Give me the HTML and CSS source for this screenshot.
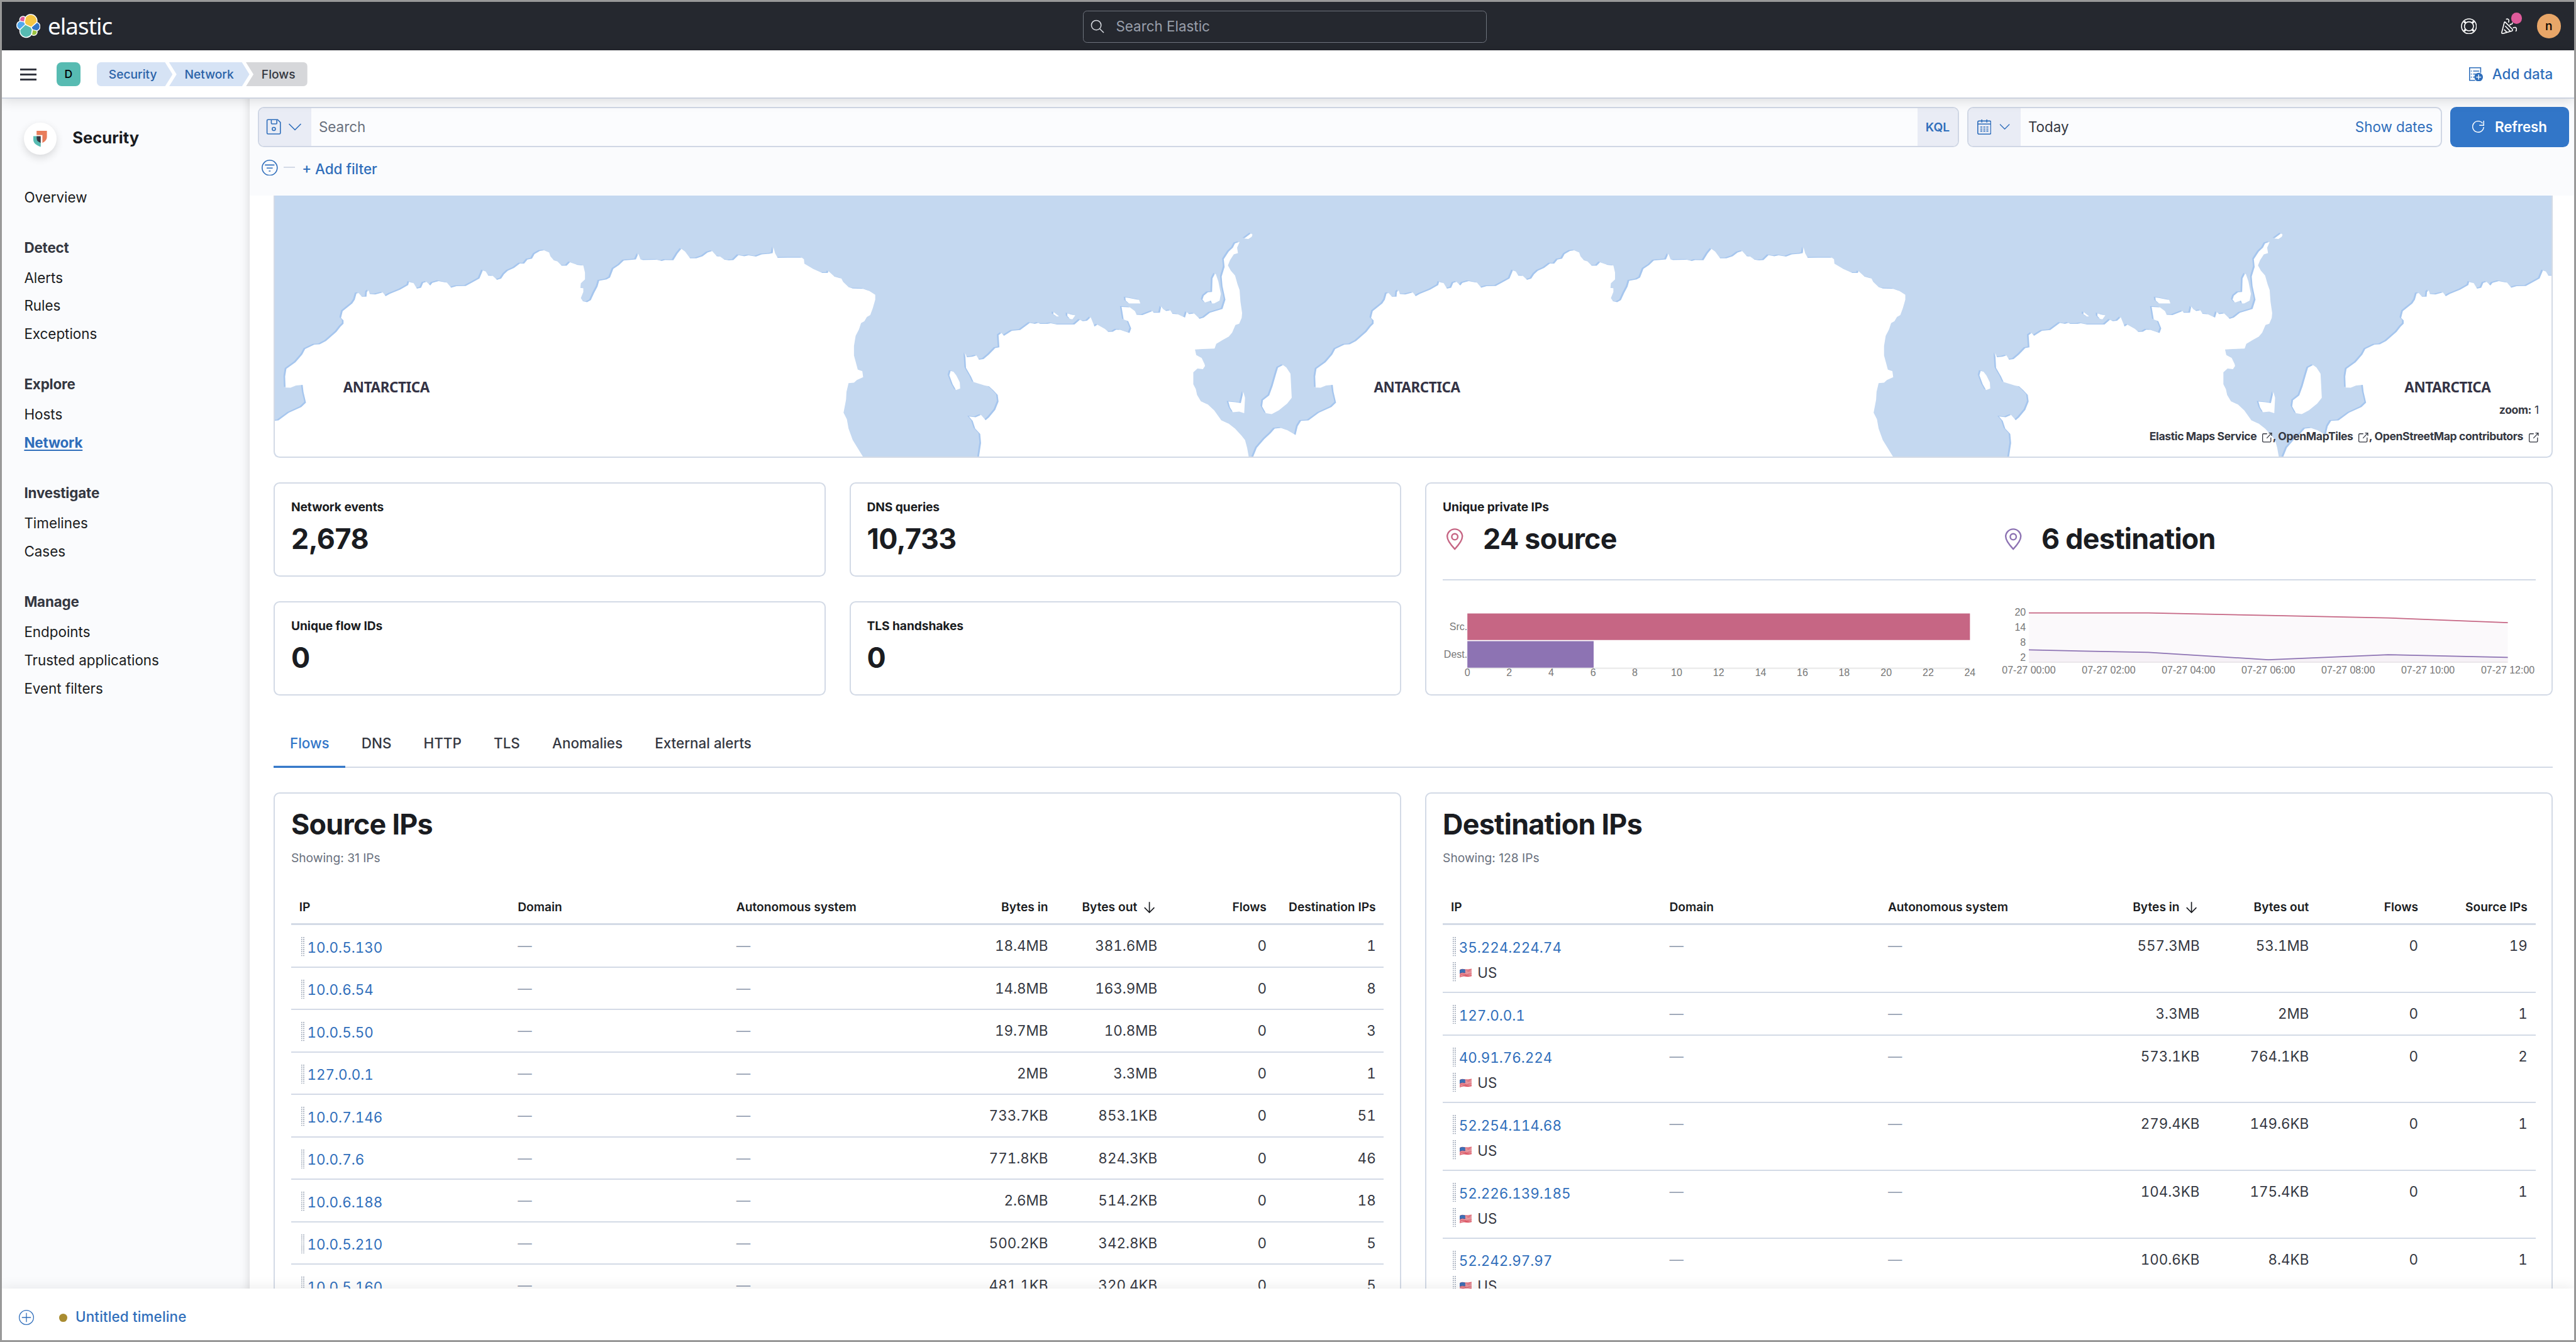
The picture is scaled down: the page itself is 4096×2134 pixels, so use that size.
FILE: index.html
```html
<!DOCTYPE html>
<html lang="en">
<head>
<meta charset="utf-8">
<title>Network - Security - Elastic</title>
<link rel="stylesheet" href="styles.css">
</head>
<body>
<svg class="defs" aria-hidden="true">
  <symbol id="flag" viewBox="0 0 24 18">
    <path fill="#f4f4f4" d="M0 3C5 -.5 8 1.5 12 2S20 1 24 .5V15C20 17 16 15.500 12 15.500S4 15.500 0 17.500Z"/>
    <path fill="none" stroke="#d8394a" stroke-width="1.300" d="M0 3.600C5 .1 8 2.100 12 2.600S20 1.600 24 1.100M0 6C5 2.500 8 4.500 12 5S20 4 24 3.500M0 8.400C5 4.900 8 6.900 12 7.400S20 6.400 24 5.900M0 10.800C5 7.300 8 9.300 12 9.800S20 8.800 24 8.300M0 13C5 9.700 8 11.500 12 12S20 11.200 24 10.700M0 15C5 11.900 8 13.500 12 13.900S20 13.500 24 12.900M0 17C5 13.900 8 15 12 15.300S20 15.700 24 14.700"/>
    <path fill="#3d6fb4" d="M0 3C4 .3 7 1 11 1.900V9C7 8 4 7.800 0 10.200Z"/>
  </symbol>
  <symbol id="popout" viewBox="0 0 16 16">
    <path fill="none" stroke="currentColor" stroke-width="1.200" d="M8 2.500H3A1.500 1.500 0 0 0 1.500 4V13A1.500 1.500 0 0 0 3 14.500H12A1.500 1.500 0 0 0 13.500 13V8M10.500 1.500H14.500V5.500M14.500 1.500L7.500 9"/>
  </symbol>
  <symbol id="chevron" viewBox="0 0 16 16">
    <path fill="none" stroke="currentColor" stroke-width="1.100" stroke-linecap="round" stroke-linejoin="round" d="M2 5L8 11L14 5"/>
  </symbol>
  <symbol id="pin" viewBox="0 0 16 16">
    <path fill="none" stroke="currentColor" d="M8 14.600C5 11.500 3 8.800 3 6.300A5 4.900 0 0 1 13 6.300C13 8.800 11 11.500 8 14.600Z"/>
    <circle cx="8" cy="6.500" r="2" fill="none" stroke="currentColor"/>
  </symbol>
  <symbol id="sort-down" viewBox="0 0 16 16">
    <path fill="none" stroke="currentColor" stroke-width="1.400" d="M8 1V15M1.500 8.500L8 15L14.500 8.500"/>
  </symbol>
</svg>

<div class="app">
  <header class="topbar">
    <a class="brand">
      <svg class="brand-mark" viewBox="0 0 32 32">
        <g id="cluster" fill="#fff" stroke="#fff" stroke-width="2.400" stroke-linejoin="round">
          <path d="M12.580 13.787l7.002 3.211 7.066-6.213a7.849 7.849 0 0 0 .152-1.557c0-4.287-3.472-7.760-7.744-7.760a7.707 7.707 0 0 0-6.396 3.390l-1.176 6.118z"/>
          <path d="M5.333 21.228A7.964 7.964 0 0 0 5.180 22.800c0 4.287 3.489 7.775 7.776 7.775 2.580 0 4.984-1.284 6.428-3.406l1.160-6.091-1.556-2.987-7.033-3.210z"/>
          <path d="M5.288 9.067l4.799 1.136L11.140 4.730A3.790 3.790 0 0 0 8.846 3.960 3.810 3.810 0 0 0 5.040 7.766c0 .448.088.896.248 1.300z"/>
          <path d="M4.872 10.214C2.740 10.923 1.240 12.958 1.240 15.200c0 2.184 1.351 4.136 3.376 4.910l6.734-6.120-1.232-2.655z"/>
          <path d="M20.874 27.187a3.803 3.803 0 0 0 2.287.773 3.810 3.810 0 0 0 3.806-3.805c0-.470-.080-.918-.240-1.320l-4.799-1.122z"/>
          <path d="M21.848 20.560l5.280 1.237A5.315 5.315 0 0 0 30.760 16.800 5.260 5.260 0 0 0 27.384 11.900l-6.902 6.060z"/>
        </g>
        <path fill="#f5c644" d="M12.580 13.787l7.002 3.211 7.066-6.213a7.849 7.849 0 0 0 .152-1.557c0-4.287-3.472-7.760-7.744-7.760a7.707 7.707 0 0 0-6.396 3.390l-1.176 6.118z"/>
        <path fill="#57bbb2" d="M5.333 21.228A7.964 7.964 0 0 0 5.180 22.800c0 4.287 3.489 7.775 7.776 7.775 2.580 0 4.984-1.284 6.428-3.406l1.160-6.091-1.556-2.987-7.033-3.210z"/>
        <path fill="#df5b9b" d="M5.288 9.067l4.799 1.136L11.140 4.730A3.790 3.790 0 0 0 8.846 3.960 3.810 3.810 0 0 0 5.040 7.766c0 .448.088.896.248 1.300z"/>
        <path fill="#53a8ed" d="M4.872 10.214C2.740 10.923 1.240 12.958 1.240 15.200c0 2.184 1.351 4.136 3.376 4.910l6.734-6.120-1.232-2.655z"/>
        <path fill="#9bc441" d="M20.874 27.187a3.803 3.803 0 0 0 2.287.773 3.810 3.810 0 0 0 3.806-3.805c0-.470-.080-.918-.240-1.320l-4.799-1.122z"/>
        <path fill="#3276c8" d="M21.848 20.560l5.280 1.237A5.315 5.315 0 0 0 30.760 16.800 5.260 5.260 0 0 0 27.384 11.900l-6.902 6.060z"/>
      </svg>
      <span class="brand-name">elastic</span>
    </a>
    <div class="global-search">
      <svg viewBox="0 0 16 16"><path fill="none" stroke="currentColor" stroke-width="1.100" d="M10.500 10.500L15 15"/><circle cx="6.500" cy="6.500" r="5.500" fill="none" stroke="currentColor" stroke-width="1.100"/></svg>
      <span>Search Elastic</span>
    </div>
    <div class="topbar-actions">
      <svg class="icon" viewBox="0 0 16 16" fill="none" stroke="currentColor"><circle cx="8" cy="8" r="7.400"/><circle cx="8" cy="8" r="4.500"/><path stroke-width="2" d="M3.200 3.200L4.800 4.800M12.800 3.200L11.200 4.800M3.200 12.800L4.800 11.200M12.800 12.800L11.200 11.200"/></svg>
      <span class="news">
        <svg class="icon" viewBox="0 0 16 16" fill="none" stroke="currentColor" stroke-linecap="round" stroke-linejoin="round"><path d="M4 3.800L11 10.800C11.600 11.500 11.400 12.300 10.700 12.600L1.800 15.200C1 15.400.4 14.900.6 14.100L3.100 4.400C3.200 3.700 3.600 3.500 4 3.800ZM3.200 11.500L5.800 14M4.300 8L9 12.900M5.200.9C6.500.3 7.800 1.200 7.700 2.500 7.700 3 7.600 3.400 7.300 3.900M8.700 6.700C9 5.900 9.700 5.800 10.400 5.900 11 5.800 11.200 5.200 11.200 4.600M12 9.500C13.500 8.600 15 9 15.200 10.600 15.300 11.400 15 12.200 14.700 12.700"/></svg>
        <i class="news-dot"></i>
      </span>
      <span class="user">n</span>
    </div>
  </header>

  <div class="crumbbar">
    <span class="menu"><i></i><i></i><i></i></span>
    <span class="space">D</span>
    <nav class="crumbs">
      <a class="crumb crumb-first">Security</a>
      <a class="crumb">Network</a>
      <span class="crumb crumb-last">Flows</span>
    </nav>
    <a class="add-data">
      <svg viewBox="0 0 28 28"><path fill="none" stroke="currentColor" stroke-width="2" d="M12 26H1V1H23V11M3.500 7.500H5.500M8 7.500H20M3.500 13.500H5.500M8 13.500H14M3.500 19.500H5.500M8 19.500H11"/><circle cx="19" cy="19.500" r="8.500" fill="currentColor"/><path stroke="#fff" stroke-width="1.800" d="M19 14.500V24.500M14 19.500H24"/></svg>
      <span>Add data</span>
    </a>
  </div>

  <div class="body">
    <aside class="sidebar">
      <div class="solution">
        <span class="solution-icon"><svg viewBox="0 0 27 32"><path fill="#e87c5a" d="M6.500 0H27V12C27 18 23.500 21.500 18 24V8.500H6.500Z"/><path fill="#57bbb2" d="M0 10.500H6.500V17L14.700 24.300V32C5 28.500 0 24 0 17.500Z"/><path fill="#343741" d="M6.500 10.500H14.700V24.300C9 21.500 6.500 19.500 6.500 15Z"/></svg></span>
        <h2>Security</h2>
      </div>
      <ul><li>Overview</li></ul>
      <ul><li class="group">Detect</li><li>Alerts</li><li>Rules</li><li>Exceptions</li></ul>
      <ul><li class="group">Explore</li><li>Hosts</li><li><a class="current">Network</a></li></ul>
      <ul><li class="group">Investigate</li><li>Timelines</li><li>Cases</li></ul>
      <ul><li class="group">Manage</li><li>Endpoints</li><li>Trusted applications</li><li>Event filters</li></ul>
    </aside>

    <main class="main">
      <section class="querybar">
        <div class="query-row">
          <div class="field query-field">
            <span class="prepend saved">
              <svg class="icon" viewBox="0 0 32 32" fill="none" stroke="currentColor" stroke-width="2"><path d="M4 1.500H23L28.500 7V28A2 2 0 0 1 26.500 30H4A2 2 0 0 1 2 28V3.500A2 2 0 0 1 4 1.500ZM10.500 2V8.500A1.500 1.500 0 0 0 12 10H20A1.500 1.500 0 0 0 21.500 8.500V2"/><circle cx="15.500" cy="20" r="3.200"/></svg>
              <svg class="chev" viewBox="0 0 16 16"><use href="#chevron"/></svg>
            </span>
            <span class="placeholder">Search</span>
            <span class="kql">KQL</span>
          </div>
          <div class="field date-field">
            <span class="prepend calendar">
              <svg class="cal" viewBox="0 0 28 30" fill="none" stroke="currentColor" stroke-width="2"><rect x="1" y="3" width="26" height="26" rx="2.500"/><path d="M1 9H27M9 0V6M19 0V6"/><path stroke-dasharray="4 2" d="M6 15H22M6 19H22M6 23H22"/></svg>
              <svg class="chev-s" viewBox="0 0 16 16"><use href="#chevron"/></svg>
            </span>
            <span class="today">Today</span>
            <a class="show-dates">Show dates</a>
          </div>
          <button class="refresh">
            <svg viewBox="0 0 24 26" fill="none" stroke="currentColor" stroke-width="1.800"><path d="M20.500 5A11 11 0 1 0 22.800 12.500M22.800 0V9H14"/></svg>
            <span>Refresh</span>
          </button>
        </div>
        <div class="filter-row">
          <svg class="filter-icon" viewBox="0 0 32 32" fill="none" stroke="currentColor" stroke-width="2"><circle cx="16" cy="16" r="15"/><path d="M6.500 10.500H25.500M10 16.500H22M14.300 22.500H17.700"/></svg>
          <i class="filter-dash"></i>
          <a>+ Add filter</a>
        </div>
      </section>

      <div class="content">
        <section class="map">
          <svg class="map-canvas" viewBox="545 388 4526 520" preserveAspectRatio="none">
            <defs>
              <g id="continent">
                <path d="M-70 1465V1458L-61 1410-43 1365-28 1335-18 1310-3 1307 12 1318 32 1344 37 1298 45 1270 63 1268 88 1228 118 1198 129 1175 123 1120 121 1083 105 1086 92 1098 80 1097 79 1040 82 1000 104 965 120 925 127 897 149 874 162 872 177 855 202 808 212 780 219 765 219 748 213 735 217 700 240 660 246 640 250 608 255 606 263 625 274 625 275 600 279 592 282 611 295 613 313 603 320 622 330 610 355 588 374 564 376 548 387 554 395 583 405 578 410 553 418 548 427 567 432 553 447 544 457 548 467 552 477 578 490 570 512 569 528 550 545 530 553 488 560 494 566 515 577 517 587 537 597 531 604 508 613 490 628 475 642 452 652 453 660 432 671 427 677 403 690 387 700 384 712 395 715 415 723 435 732 442 742 464 754 464 762 446 780 460 794 463 798 500 798 535 788 555 787 578 794 581 794 600 788 632 793 648 803 653 812 643 820 605 828 572 832 542 850 535 858 525 866 480 880 460 891 437 920 431 926 402 931 430 937 434 970 433 982 439 990 434 1010 435 1020 400 1029 376 1038 390 1050 425 1065 425 1080 415 1092 395 1103 388 1114 415 1122 416 1132 432 1143 436 1154 434 1166 409 1180 415 1190 410 1208 416 1222 405 1240 402 1248 398 1250 368 1254 400 1260 423 1285 422 1318 422 1323 430 1324 453 1345 480 1367 501 1380 501 1382 492 1396 520 1413 531 1417 548 1430 575 1440 582 1465 584 1480 595 1494 615 1494 640 1488 685 1482 720 1474 730 1468 752 1460 762 1455 795 1447 828 1443 880 1443 930 1448 970 1452 1003 1463 1012 1465 1043 1450 1058 1443 1072 1430 1074 1425 1120 1424 1160 1418 1228 1426 1262 1430 1310 1440 1370 1465 1458V1465Z"/>
                <path transform="translate(1326.700 0)" d="M416 1465V1458L421 1385 419 1338 407 1310 401 1270 392 1247 408 1251 421 1239 432 1267 440 1252 455 1213 463 1170 461 1135 450 1110 440 1090 430 1086 403 1068 397 1040 385 995 383 918 387 939 400 937 410 930 416 952 427 949 440 925 455 892 465 888 463 825 470 813 476 828 495 802 515 798 538 761 550 766 558 761 563 766 580 766 588 763 603 769 645 769 658 745 665 752 675 750 684 732 693 780 700 770 718 792 726 808 737 807 745 796 755 797 777 813 781 790 774 752 763 743 758 678 778 680 790 700 794 719 808 720 832 700 835 708 850 708 853 676 858 690 865 699 875 696 880 714 893 716 910 733 914 705 920 715 932 712 945 740 955 733 970 708 1000 688 1007 640 1000 570 998 520 1005 470 1003 430 1015 390 1025 370 1030 348 1041 340 1035 370 1037 398 1027 405 1018 435 1013 462 1020 490 1030 514 1036 560 1041 590 1043 650 1047 710 1046 735 1040 765 1031 772 1023 812 1015 832 1000 850 985 870 981 894 952 897 934 899 937 928 950 943 957 975 958 985 953 1001 940 998 930 1018 930 1080 936 1105 939 1135 948 1168 965 1185 980 1215 997 1267 1015 1285 1030 1310 1045 1345 1054 1370 1059 1410 1063 1458V1465Z
                M1052 322L1068 296 1072 302 1070 313 1062 325ZM982 505L976 530 975 600 965 602 955 620 952 640 958 655 972 645 975 660 980 660 993 645 996 610 990 545 984 508ZM767 629L775 631 800 642 803 660 776 660 768 645ZM595 705L608 727 603 728 594 715ZM628 711L636 717 647 722 640 742 634 740 628 725ZM348 1010L355 1015 362 1035 370 1070 371 1102 361 1110 353 1080 345 1033ZM1145 980L1153 992 1163 1025 1166 1150 1155 1180 1135 1215 1118 1235 1104 1230 1095 1195 1097 1163 1112 1138 1120 1090 1128 1030 1133 994ZM1050 1120L1054 1150 1052 1230 1040 1222 1025 1225 1018 1200 1014 1170 1030 1173 1044 1178Z"/>
              </g>
            </defs>
            <g transform="translate(500 350) scale(.8291 .3827)">
              <g fill="#a6c6ee" transform="translate(-4 -4)"><use href="#continent"/><use href="#continent" x="2470"/><use href="#continent" x="4940"/></g>
              <g fill="#fff"><use href="#continent"/><use href="#continent" x="2470"/><use href="#continent" x="4940"/></g>
            </g>
            <g class="map-label"><text x="681" y="780">ANTARCTICA</text><text x="2730" y="780">ANTARCTICA</text><text x="4779" y="780">ANTARCTICA</text></g>
          </svg>
          <div class="map-notes">
            <p><b>zoom:</b> 1</p>
            <p class="credits"><b>Elastic Maps Service</b><svg viewBox="0 0 16 16"><use href="#popout"/></svg><b>, OpenMapTiles</b><svg viewBox="0 0 16 16"><use href="#popout"/></svg><b>, OpenStreetMap contributors</b><svg viewBox="0 0 16 16"><use href="#popout"/></svg></p>
          </div>
        </section>

        <section class="kpis">
          <div class="kpi-grid">
            <div class="panel kpi"><h4>Network events</h4><strong>2,678</strong></div>
            <div class="panel kpi"><h4>DNS queries</h4><strong>10,733</strong></div>
            <div class="panel kpi"><h4>Unique flow IDs</h4><strong>0</strong></div>
            <div class="panel kpi"><h4>TLS handshakes</h4><strong>0</strong></div>
          </div>
          <div class="panel kpi">
            <h4>Unique private IPs</h4>
            <div class="halves">
              <div class="stat"><svg class="source" viewBox="0 0 16 16"><use href="#pin"/></svg><strong>24 source</strong></div>
              <div class="stat"><svg class="dest" viewBox="0 0 16 16"><use href="#pin"/></svg><strong>6 destination</strong></div>
            </div>
            <hr>
            <div class="halves charts">
              <svg viewBox="2866 1176 1062 172">
                <path stroke="#eaeaea" stroke-width="3" d="M2915 1328H3914"/>
                <path fill="#c66684" d="M2915 1219H3914V1272H2915Z"/>
                <path fill="#8d73b3" d="M2915 1274H3166V1327H2915Z"/>
                <g text-anchor="end"><text x="2915" y="1252">Src.</text><text x="2915" y="1307">Dest.</text></g>
                <g text-anchor="middle"><text x="2915" y="1344">0</text><text x="2998" y="1344">2</text><text x="3081.500" y="1344">4</text><text x="3165" y="1344">6</text><text x="3248" y="1344">8</text><text x="3331" y="1344">10</text><text x="3414.500" y="1344">12</text><text x="3498" y="1344">14</text><text x="3581" y="1344">16</text><text x="3664" y="1344">18</text><text x="3747.500" y="1344">20</text><text x="3831" y="1344">22</text><text x="3914" y="1344">24</text></g>
              </svg>
              <svg viewBox="3976 1176 1062 172">
                <path fill="#fbf9fb" d="M4031 1218H4269L4507 1223 4745 1228 4983 1237.500V1316H4031Z"/>
                <path fill="#f6f1f6" d="M4031 1291.500L4269 1296.500 4507 1311 4745 1301 4983 1306.500V1316H4031Z"/>
                <path stroke="#e4e0e4" stroke-width="2" d="M4031 1316H4983"/>
                <path fill="none" stroke="#c66684" stroke-width="2.200" d="M4031 1218H4269L4507 1223 4745 1228 4983 1237.500"/>
                <path fill="none" stroke="#8d73b3" stroke-width="2.200" d="M4031 1291.500L4269 1296.500 4507 1311 4745 1301 4983 1306.500"/>
                <g text-anchor="end"><text x="4025" y="1224">20</text><text x="4025" y="1254">14</text><text x="4025" y="1283">8</text><text x="4025" y="1313">2</text></g>
                <g text-anchor="middle"><text x="4031" y="1338">07-27 00:00</text><text x="4189.700" y="1338">07-27 02:00</text><text x="4348.300" y="1338">07-27 04:00</text><text x="4507" y="1338">07-27 06:00</text><text x="4665.700" y="1338">07-27 08:00</text><text x="4824.300" y="1338">07-27 10:00</text><text x="4983" y="1338">07-27 12:00</text></g>
              </svg>
            </div>
          </div>
        </section>

        <nav class="tabs"><a class="active">Flows</a><a>DNS</a><a>HTTP</a><a>TLS</a><a>Anomalies</a><a>External alerts</a></nav>

        <section class="tables">
          <div class="panel">
            <h3>Source IPs</h3>
            <p class="showing">Showing: 31 IPs</p>
            <div class="row head"><span>IP</span><span>Domain</span><span>Autonomous system</span><span>Bytes in</span><span>Bytes out<svg viewBox="0 0 16 16"><use href="#sort-down"/></svg></span><span>Flows</span><span>Destination IPs</span></div>
            <div class="row"><div class="ip"><a>10.0.5.130</a></div><i>—</i><i>—</i><span>18.4MB</span><span>381.6MB</span><span>0</span><span>1</span></div>
            <div class="row"><div class="ip"><a>10.0.6.54</a></div><i>—</i><i>—</i><span>14.8MB</span><span>163.9MB</span><span>0</span><span>8</span></div>
            <div class="row"><div class="ip"><a>10.0.5.50</a></div><i>—</i><i>—</i><span>19.7MB</span><span>10.8MB</span><span>0</span><span>3</span></div>
            <div class="row"><div class="ip"><a>127.0.0.1</a></div><i>—</i><i>—</i><span>2MB</span><span>3.3MB</span><span>0</span><span>1</span></div>
            <div class="row"><div class="ip"><a>10.0.7.146</a></div><i>—</i><i>—</i><span>733.7KB</span><span>853.1KB</span><span>0</span><span>51</span></div>
            <div class="row"><div class="ip"><a>10.0.7.6</a></div><i>—</i><i>—</i><span>771.8KB</span><span>824.3KB</span><span>0</span><span>46</span></div>
            <div class="row"><div class="ip"><a>10.0.6.188</a></div><i>—</i><i>—</i><span>2.6MB</span><span>514.2KB</span><span>0</span><span>18</span></div>
            <div class="row"><div class="ip"><a>10.0.5.210</a></div><i>—</i><i>—</i><span>500.2KB</span><span>342.8KB</span><span>0</span><span>5</span></div>
            <div class="row"><div class="ip"><a>10.0.5.160</a></div><i>—</i><i>—</i><span>481.1KB</span><span>320.4KB</span><span>0</span><span>5</span></div>
          </div>
          <div class="panel">
            <h3>Destination IPs</h3>
            <p class="showing">Showing: 128 IPs</p>
            <div class="row head"><span>IP</span><span>Domain</span><span>Autonomous system</span><span>Bytes in<svg viewBox="0 0 16 16"><use href="#sort-down"/></svg></span><span>Bytes out</span><span>Flows</span><span>Source IPs</span></div>
            <div class="row tall"><div class="ip"><a>35.224.224.74</a><span class="geo"><svg viewBox="0 0 24 18"><use href="#flag"/></svg>US</span></div><i>—</i><i>—</i><span>557.3MB</span><span>53.1MB</span><span>0</span><span>19</span></div>
            <div class="row"><div class="ip"><a>127.0.0.1</a></div><i>—</i><i>—</i><span>3.3MB</span><span>2MB</span><span>0</span><span>1</span></div>
            <div class="row tall"><div class="ip"><a>40.91.76.224</a><span class="geo"><svg viewBox="0 0 24 18"><use href="#flag"/></svg>US</span></div><i>—</i><i>—</i><span>573.1KB</span><span>764.1KB</span><span>0</span><span>2</span></div>
            <div class="row tall"><div class="ip"><a>52.254.114.68</a><span class="geo"><svg viewBox="0 0 24 18"><use href="#flag"/></svg>US</span></div><i>—</i><i>—</i><span>279.4KB</span><span>149.6KB</span><span>0</span><span>1</span></div>
            <div class="row tall"><div class="ip"><a>52.226.139.185</a><span class="geo"><svg viewBox="0 0 24 18"><use href="#flag"/></svg>US</span></div><i>—</i><i>—</i><span>104.3KB</span><span>175.4KB</span><span>0</span><span>1</span></div>
            <div class="row tall"><div class="ip"><a>52.242.97.97</a><span class="geo"><svg viewBox="0 0 24 18"><use href="#flag"/></svg>US</span></div><i>—</i><i>—</i><span>100.6KB</span><span>8.4KB</span><span>0</span><span>1</span></div>
          </div>
        </section>
      </div>
    </main>
  </div>

  <footer class="timeline-bar">
    <svg viewBox="0 0 30 30" fill="none" stroke="currentColor" stroke-width="1.600"><circle cx="15" cy="15" r="14.200"/><path d="M15 6V24M6 15H24"/></svg>
    <i></i>
    <a>Untitled timeline</a>
  </footer>
</div>
</body>
</html>
```
FILE: styles.css
```css
/* 1rem = 10 layout units; the root size scales with the window */
html { font-size: calc(100vw / 255.9); }
* { box-sizing: border-box; margin: 0; }
body {
  height: 100vh;
  padding: 0.2rem;
  overflow: hidden;
  background: #999;
  color: #343741;
  font: 400 1.4rem/2.8rem Inter, "Liberation Sans", sans-serif;
}
ul { list-style: none; padding: 0; }
svg { display: block; flex: none; }
i { font-style: normal; }
.defs { position: absolute; width: 0; height: 0; }
.icon { width: 1.6rem; height: 1.6rem; }

.app { display: flex; flex-direction: column; height: 100%; background: #fff; overflow: hidden; }

/* top bar */
.topbar {
  flex: none;
  display: grid;
  grid-template-columns: 107.4rem 40.1rem 1fr;
  align-items: center;
  height: 4.8rem;
  background: #25282f;
  color: #fff;
}
.brand { display: flex; align-items: center; padding-left: 1.4rem; }
.brand-mark { width: 2.4rem; height: 2.4rem; }
.brand-name { margin-left: 0.75rem; font: 400 2.3rem/2.4rem "Noto Sans", sans-serif; letter-spacing: -0.06rem; }
.global-search {
  display: flex;
  align-items: center;
  gap: 1.1rem;
  height: 3.2rem;
  margin-top: 0.1rem;
  padding: 0 0.7rem;
  border: 1px solid #6f747e;
  border-radius: 0.4rem;
  color: #999fab;
}
.global-search svg { width: 1.4rem; height: 1.4rem; color: #d5d8de; }
.topbar-actions { display: flex; align-items: center; justify-content: flex-end; padding-right: 1.3rem; }
.news { position: relative; margin: 0 1.95rem 0 2.4rem; }
.news-dot { position: absolute; top: -0.55rem; right: -0.5rem; width: 1.1rem; height: 1.1rem; border-radius: 50%; background: #df5b9b; }
.user { width: 2.4rem; height: 2.4rem; border-radius: 50%; background: #e8a668; color: #000; font-weight: 500; font-size: 1.2rem; line-height: 2.4rem; text-align: center; }

/* breadcrumb bar */
.crumbbar {
  flex: none;
  position: relative;
  z-index: 2;
  display: flex;
  align-items: center;
  height: 4.8rem;
  padding: 0.1rem 2.1rem 0 1.8rem;
  border-bottom: 2px solid #cdd3df;
  background: #fff;
  box-shadow: 0 0.1rem 1.2rem rgba(0, 0, 0, 0.14);
}
.menu { display: flex; flex-direction: column; gap: 0.3rem; width: 1.6rem; }
.menu i { height: 0.2rem; background: #343741; }
.space { width: 2.4rem; height: 2.4rem; margin-left: 2rem; border-radius: 0.5rem; background: #57bbb2; color: #000; font-weight: 500; font-size: 1.1rem; line-height: 2.4rem; text-align: center; }
.crumbs { display: flex; margin-left: 1.6rem; border-radius: 0.4rem; overflow: hidden; font-size: 1.2rem; font-weight: 500; line-height: 2.4rem; }
.crumb { padding: 0 1.55rem; margin-right: -0.35rem; background: #d6e3f5; color: #2a62a8; clip-path: polygon(0 0, calc(100% - 0.75rem) 0, 100% 50%, calc(100% - 0.75rem) 100%, 0 100%, 0.75rem 50%); }
.crumb-first { padding-left: 1.2rem; clip-path: polygon(0 0, calc(100% - 0.75rem) 0, 100% 50%, calc(100% - 0.75rem) 100%, 0 100%); }
.crumb-last { margin-right: 0; padding-right: 1.2rem; background: #d6d7da; color: #343741; clip-path: polygon(0 0, 100% 0, 100% 100%, 0 100%, 0.75rem 50%); }
.add-data { display: flex; align-items: center; gap: 0.9rem; margin-left: auto; color: #2f6ebb; font-weight: 500; }
.add-data svg { width: 1.4rem; height: 1.4rem; }

.body { flex: 1; display: flex; min-height: 0; }

/* solution navigation */
.sidebar {
  flex: none;
  width: 24.6rem;
  padding: 2.4rem 2.2rem;
  background: #fafbfd;
  color: #1a1c21;
  box-shadow: inset -1rem 0 1rem -1rem rgba(0, 0, 0, 0.16);
}
.solution { display: flex; align-items: center; gap: 1.6rem; height: 3.2rem; margin-bottom: 2.82rem; }
.solution-icon { display: flex; align-items: center; justify-content: center; width: 3.2rem; height: 3.2rem; border-radius: 50%; background: #fff; box-shadow: 0 0.3rem 0.8rem rgba(0, 0, 0, 0.14); }
.solution-icon svg { width: 1.35rem; height: 1.6rem; }
.solution h2 { padding-bottom: 0.2rem; font-size: 1.6rem; font-weight: 700; }
.sidebar ul + ul { margin-top: 2.2rem; }
.group { margin-bottom: 0.2rem; color: #343741; font-weight: 700; letter-spacing: -0.01rem; }
.current { color: #2f6ebb; font-weight: 700; letter-spacing: -0.01rem; text-decoration: underline; text-underline-offset: 0.2rem; }

/* query bar */
.main { flex: 1; min-width: 0; overflow: hidden; }
.querybar { height: 9.61rem; padding: 0.8rem 0.5rem 0 0.8rem; background: #fafbfd; }
.query-row { display: flex; gap: 0.8rem; height: 4rem; }
.field { display: flex; align-items: center; border: 2px solid #d0d7e5; border-radius: 0.6rem; background: #fbfcfe; overflow: hidden; }
.prepend { display: flex; align-items: center; align-self: stretch; background: #e9ecf5; color: #2f6ebb; }
.query-field { flex: 1; }
.saved { gap: 0.5rem; width: 5.2rem; padding-left: 0.7rem; }
.chev { width: 1.5rem; height: 1.5rem; }
.placeholder { flex: 1; padding: 0.1rem 0 0 0.75rem; color: #69707d; }
.kql { align-self: stretch; width: 4rem; background: #e9ecf5; color: #2f6ebb; font-weight: 600; font-size: 1.2rem; line-height: 3.8rem; text-align: center; }
.date-field { width: 47.2rem; padding-right: 0.8rem; }
.calendar { gap: 0.7rem; width: 5.2rem; padding-left: 0.9rem; }
.cal { width: 1.4rem; height: 1.5rem; }
.chev-s { width: 1.2rem; height: 1.2rem; }
.today { flex: 1; padding: 0.1rem 0 0 0.75rem; }
.show-dates { padding-top: 0.1rem; color: #2f6ebb; }
.refresh { display: flex; align-items: center; justify-content: center; gap: 1.05rem; width: 11.8rem; padding: 0.1rem 0 0; border: 0; border-radius: 0.6rem; background: #3276c8; color: #fff; font: inherit; font-weight: 600; letter-spacing: -0.01rem; }
.refresh svg { width: 1.2rem; height: 1.3rem; }
.filter-row { display: flex; align-items: center; height: 2.8rem; margin-top: 0.85rem; padding-left: 0.4rem; color: #2f6ebb; font-weight: 500; }
.filter-icon { width: 1.6rem; height: 1.6rem; margin-bottom: 0.4rem; }
.filter-dash { width: 1.1rem; height: 2px; margin: 0 0.7rem 0.5rem 0.6rem; background: #d3dae6; }

.content { padding: 0 2.1rem 0 2.4rem; }
.panel { border: 2px solid #d3dae6; border-radius: 0.6rem; padding: 1.6rem 1.6rem 0; background: #fff; }

/* map */
.map { position: relative; height: 26.1rem; border: 2px solid #d3dae6; border-top: 0; border-radius: 0 0 0.6rem 0.6rem; overflow: hidden; background: #c4d8f0; }
.map-canvas { width: 100%; height: 100%; }
.map-label { fill: #343345; font: 700 28px "Noto Sans", sans-serif; letter-spacing: -0.5px; }
.map-notes { position: absolute; right: 1.25rem; bottom: 0.75rem; color: #343741; font-size: 1.1rem; line-height: 2.6rem; text-align: right; }
.map-notes b { font-weight: 700; letter-spacing: -0.025rem; white-space: pre; }
.credits { display: flex; align-items: center; }
.credits svg { width: 1.1rem; height: 1.1rem; margin: 0.3rem 0 0 0.48rem; }

/* key figures */
.kpis { display: grid; grid-template-columns: 1fr 1fr; gap: 2.4rem; margin-top: 2.4rem; }
.kpi-grid { display: grid; grid-template-columns: 1fr 1fr; grid-auto-rows: 9.4rem; gap: 2.4rem; }
.kpi { color: #1a1c21; }
.kpi h4 { margin-bottom: 1.25rem; font-size: 1.2rem; font-weight: 700; line-height: 1.5rem; letter-spacing: -0.005rem; }
.kpi strong { display: block; font-size: 2.8rem; font-weight: 700; line-height: 2.4rem; letter-spacing: -0.03rem; }
.halves { display: grid; grid-template-columns: 1fr 1fr; gap: 2.4rem; }
.stat { display: flex; align-items: center; gap: 1.6rem; }
.stat svg { width: 2.4rem; height: 2.4rem; }
.stat strong { letter-spacing: -0.045rem; }
.source { color: #c66684; }
.dest { color: #8d73b3; }
.kpi hr { height: 2px; margin: 2.75rem 0 1.15rem; border: 0; background: #d3dae6; }
.charts { height: 8.6rem; }
.charts svg { width: 100%; height: 8.6rem; }
.charts text { fill: #777; font: 20px "Liberation Sans", sans-serif; }

/* tabs */
.tabs { display: flex; height: 4.8rem; margin: 2.4rem 0; box-shadow: inset 0 -2px #d3dae6; font-weight: 500; line-height: 4.65rem; }
.tabs a { padding: 0 1.6rem; }
.tabs .active { color: #3276c8; box-shadow: inset 0 -0.2rem #3276c8; }

/* tables */
.tables { display: grid; grid-template-columns: 1fr 1fr; gap: 2.4rem; }
.tables .panel { height: 60rem; }
.tables h3 { color: #1a1c21; font-size: 2.8rem; font-weight: 700; line-height: 3rem; letter-spacing: -0.045rem; }
.showing { margin: 0.9rem 0 2.3rem; color: #69707d; font-size: 1.2rem; line-height: 1.8rem; }
.row {
  display: grid;
  grid-template-columns: 20% 20% 20% repeat(4, 10%);
  height: 4.218rem;
  border-bottom: 2px solid #d3dae6;
  line-height: 4.1rem;
  font-feature-settings: "tnum";
}
.row > * { padding: 0 0.8rem; }
.row > span { text-align: right; white-space: nowrap; }
.row > i { color: #98a2b3; }
.tall { height: 6.73rem; }
.head { height: 3.5rem; border-bottom-width: 3px; color: #1a1c21; font-size: 1.2rem; font-weight: 600; line-height: 3.4rem; font-feature-settings: normal; }
.head > span:nth-child(-n+3) { text-align: left; }
.head svg { display: inline-block; width: 1.2rem; height: 1.2rem; margin: 0 0.2rem 0 0.6rem; vertical-align: -0.2rem; }
.ip { display: flex; flex-direction: column; align-items: flex-start; gap: 0.6rem; line-height: 1.9rem; }
.row > .ip { padding: 1.18rem 0 0 1rem; }
.ip > * { display: flex; align-items: center; height: 1.9rem; padding-top: 0.2rem; color: #2f6ebb; }
.ip > *::before { content: ""; width: 0.3rem; height: 1.9rem; margin: -0.2rem 0.3rem 0 0; background: conic-gradient(from 270deg, #98a2b3 25%, transparent 0) 0 0 / 0.2rem 0.2rem; }
.ip .geo { color: #343741; }
.geo svg { width: 1.2rem; height: 0.9rem; margin: 0 0.55rem 0 0.1rem; }

/* timeline bar */
.timeline-bar { flex: none; position: relative; z-index: 2; display: flex; align-items: center; height: 5.1rem; padding: 0.6rem 1.7rem 0; background: #fff; color: #2f6ebb; font-weight: 500; letter-spacing: 0.01rem; box-shadow: 0 -0.1rem 1.2rem rgba(0, 0, 0, 0.08); }
.timeline-bar svg { width: 1.5rem; height: 1.5rem; }
.timeline-bar i { width: 0.8rem; height: 0.8rem; margin: 0.1rem 0.8rem 0 2.5rem; border-radius: 50%; background: #a98c31; }
```
